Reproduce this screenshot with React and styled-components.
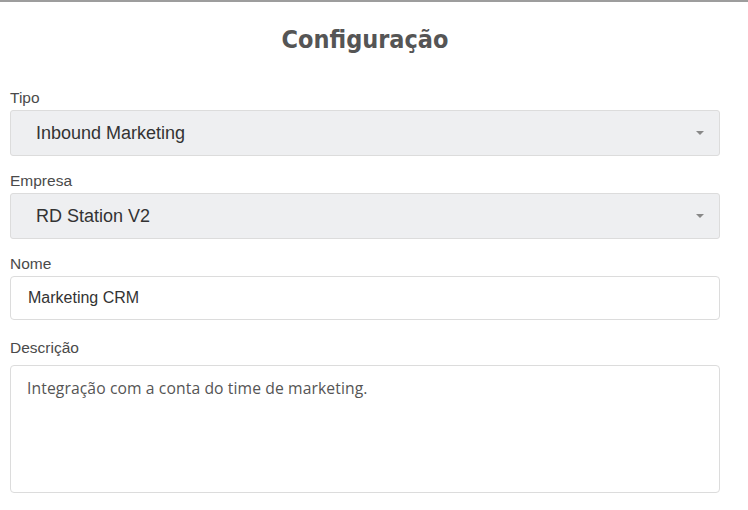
import React from "react";
import styled, { createGlobalStyle } from "styled-components";

const Global = createGlobalStyle`
  html, body { margin: 0; padding: 0; background: #fff; }
  body { font-family: "Liberation Sans", Arial, sans-serif; }
  * { box-sizing: border-box; }
`;

const Page = styled.div`
  width: 748px;
  min-height: 510px;
  border-top: 2px solid #9d9d9d;
  background: #fff;
`;

const Title = styled.h1`
  margin: 0;
  padding-top: 23px;
  height: 88px;
  text-align: center;
  font-family: "DejaVu Sans Condensed", "DejaVu Sans", sans-serif;
  font-weight: 700;
  font-size: 25px;
  letter-spacing: 0;
  color: #555;
  padding-right: 18px;
`;

const Form = styled.div`
  padding: 0 28px 0 10px;
  display: flex;
  flex-direction: column;
`;

const Field = styled.div`
  display: flex;
  flex-direction: column;
  margin-bottom: ${(p) => p.$mb || 17}px;
`;

const Label = styled.label`
  font-size: 15.5px;
  line-height: 16px;
  color: #4a4a4a;
  margin-bottom: ${(p) => p.$gap || 4}px;
`;

const Select = styled.div`
  height: 46px;
  background: #eeeff1;
  border: 1px solid #dcdcdc;
  border-radius: 3px;
  display: flex;
  align-items: center;
  justify-content: space-between;
  padding: 0 15px 0 25px;
  font-size: 18px;
  color: #333;
`;

const Caret = styled.span`
  width: 0;
  height: 0;
  border-left: 4px solid transparent;
  border-right: 4px solid transparent;
  border-top: 4px solid #888;
`;

const Input = styled.div`
  height: 44px;
  border: 1px solid #dcdcdc;
  border-radius: 4px;
  display: flex;
  align-items: center;
  padding: 0 17px;
  font-size: 16px;
  color: #333;
`;

const TextArea = styled.div`
  height: 128px;
  border: 1px solid #dcdcdc;
  border-radius: 4px;
  padding: 12px 16px;
  font-family: "Open Sans", Lato, sans-serif;
  font-size: 15.7px;
  line-height: 21px;
  color: #555;
  letter-spacing: 0.1px;
`;

export default function App() {
  return (
    <Page>
      <Global />
      <Title>Configuração</Title>
      <Form>
        <Field>
          <Label>Tipo</Label>
          <Select>
            <span>Inbound Marketing</span>
            <Caret />
          </Select>
        </Field>
        <Field>
          <Label>Empresa</Label>
          <Select>
            <span>RD Station V2</span>
            <Caret />
          </Select>
        </Field>
        <Field $mb={20}>
          <Label>Nome</Label>
          <Input>Marketing CRM</Input>
        </Field>
        <Field>
          <Label $gap={9}>Descrição</Label>
          <TextArea>Integração com a conta do time de marketing.</TextArea>
        </Field>
      </Form>
    </Page>
  );
}
